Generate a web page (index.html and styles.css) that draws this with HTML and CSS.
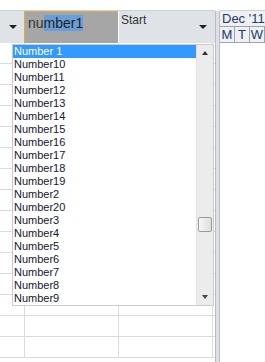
FILE: index.html
```html
<!DOCTYPE html>
<html lang="en">

<head>
    <meta charset="UTF-8">
    <title>Combo Dropdown</title>
    <link rel="stylesheet" href="styles.css">
</head>

<body>
    <div class="sheet">
        <div class="topbar"></div>
        <div class="head">
            <div class="head-cell head-sel"><span class="arrow-down"></span></div>
            <div class="head-cell head-num">nu<span class="sel-text">mber1</span></div>
            <div class="head-cell head-start">Start<span class="arrow-down"></span></div>
        </div>
        <div class="grid">
            <div class="row"><div class="c1"></div><div class="c2"></div><div class="c3"></div></div>
            <div class="row"><div class="c1"></div><div class="c2"></div><div class="c3"></div></div>
            <div class="row"><div class="c1"></div><div class="c2"></div><div class="c3"></div></div>
            <div class="row"><div class="c1"></div><div class="c2"></div><div class="c3"></div></div>
            <div class="row"><div class="c1"></div><div class="c2"></div><div class="c3"></div></div>
            <div class="row"><div class="c1"></div><div class="c2"></div><div class="c3"></div></div>
            <div class="row"><div class="c1"></div><div class="c2"></div><div class="c3"></div></div>
            <div class="row"><div class="c1"></div><div class="c2"></div><div class="c3"></div></div>
            <div class="row"><div class="c1"></div><div class="c2"></div><div class="c3"></div></div>
            <div class="row"><div class="c1"></div><div class="c2"></div><div class="c3"></div></div>
            <div class="row"><div class="c1"></div><div class="c2"></div><div class="c3"></div></div>
            <div class="row"><div class="c1"></div><div class="c2"></div><div class="c3"></div></div>
            <div class="row"><div class="c1"></div><div class="c2"></div><div class="c3"></div></div>
            <div class="row"><div class="c1"></div><div class="c2"></div><div class="c3"></div></div>
            <div class="row"><div class="c1"></div><div class="c2"></div><div class="c3"></div></div>
        </div>

        <!-- open dropdown list -->
        <div class="dropdown">
            <ul class="options">
                <li class="active">Number 1</li>
                <li>Number10</li>
                <li>Number11</li>
                <li>Number12</li>
                <li>Number13</li>
                <li>Number14</li>
                <li>Number15</li>
                <li>Number16</li>
                <li>Number17</li>
                <li>Number18</li>
                <li>Number19</li>
                <li>Number2</li>
                <li>Number20</li>
                <li>Number3</li>
                <li>Number4</li>
                <li>Number5</li>
                <li>Number6</li>
                <li>Number7</li>
                <li>Number8</li>
                <li>Number9</li>
            </ul>
            <div class="scrollbar">
                <span class="arrow-up"></span>
                <div class="track"><div class="thumb"></div></div>
                <span class="arrow-down"></span>
            </div>
        </div>
    </div>

    <div class="splitter"></div>

    <div class="calendar">
        <div class="topbar"></div>
        <div class="cal-month">Dec '11</div>
        <div class="cal-days">
            <div class="day">M</div>
            <div class="day">T</div>
            <div class="day">W</div>
        </div>
    </div>
</body>

</html>
```

FILE: styles.css
```css
* {
    margin: 0;
    padding: 0;
    box-sizing: border-box;
}

body {
    font-family: "Liberation Sans", Arial, sans-serif;
    width: 265px;
    height: 362px;
    overflow: hidden;
    display: flex;
    background-color: #fff;
}

.sheet {
    position: relative;
    width: 215px;
    display: flex;
    flex-direction: column;
}

.topbar {
    height: 11px;
    border-bottom: 1px solid #cdd1d6;
    background-color: #fff;
}

/* header row */
.head {
    display: flex;
    height: 32px;
}

.head-cell {
    position: relative;
    height: 100%;
}

.head-sel {
    width: 24px;
    background-color: #dfe2e7;
}

.head-num {
    width: 94px;
    background-color: #a6a6a6;
    border-top: 1px solid #e3a948;
    border-left: 1px solid #e3a948;
    font-size: 14px;
    color: #333;
    padding: 3px 0 0 3px;
    line-height: 17px;
}

.sel-text {
    background-color: #6a9edb;
    color: #222;
}

.head-start {
    width: 97px;
    background-color: #dfe2e7;
    border-left: 1px solid #fff;
    font-size: 12px;
    color: #333;
    padding: 2px 0 0 2px;
}

.arrow-down,
.arrow-up {
    display: block;
    width: 0;
    height: 0;
    border-left: 4px solid transparent;
    border-right: 4px solid transparent;
}

.arrow-down {
    border-top: 4px solid #222;
}

.arrow-up {
    border-bottom: 4px solid #333;
}

.head-cell .arrow-down {
    position: absolute;
    top: 14px;
}

.head-sel .arrow-down {
    left: 9px;
}

.head-start .arrow-down {
    left: 80px;
}

/* background grid */
.grid {
    display: flex;
    flex-direction: column;
}

.row {
    display: flex;
    height: 21px;
    border-bottom: 1px solid #dadada;
}

.row div {
    height: 100%;
    border-right: 1px solid #dadada;
}

.c1 {
    width: 25px;
}

.c2 {
    width: 94px;
}

.c3 {
    width: 94px;
}

/* dropdown list */
.dropdown {
    position: absolute;
    left: 12px;
    top: 44px;
    width: 202px;
    height: 262px;
    display: flex;
    background-color: #fff;
    border: 1px solid #c8ccd2;
}

.options {
    list-style: none;
    flex: 1;
    font-size: 11px;
    color: #15152e;
}

.options li {
    height: 13px;
    line-height: 13px;
    padding-left: 1px;
}

.options li.active {
    background-color: #3399ff;
    color: #fff;
}

.scrollbar {
    width: 17px;
    display: flex;
    flex-direction: column;
    align-items: center;
    background-color: #ececec;
    border-left: 1px solid #e2e2e2;
}

.scrollbar .arrow-up {
    margin-top: 6px;
    margin-bottom: 6px;
    border-left-width: 3px;
    border-right-width: 3px;
}

.scrollbar .arrow-down {
    margin-top: 6px;
    margin-bottom: 6px;
    border-left-width: 3px;
    border-right-width: 3px;
    border-top-color: #444;
}

.track {
    flex: 1;
    width: 100%;
    position: relative;
}

.thumb {
    position: absolute;
    left: 1px;
    top: 156px;
    width: 14px;
    height: 15px;
    border: 1px solid #9a9a9a;
    border-radius: 2px;
    background: linear-gradient(to right, #f6f6f6, #dedede);
}

/* splitter between sheet and calendar */
.splitter {
    width: 6px;
    margin-top: 11px;
    background-color: #dcdfe3;
    border-left: 1px solid #b9bdc3;
    border-right: 1px solid #b9bdc3;
}

/* calendar pane */
.calendar {
    flex: 1;
    color: #1f3a6b;
    font-size: 13px;
}

.cal-month {
    height: 16px;
    line-height: 15px;
    padding-left: 2px;
    white-space: nowrap;
    overflow: hidden;
    background-color: #eef0f3;
    border-bottom: 1px solid #9ea3aa;
}

.cal-days {
    display: flex;
    height: 16px;
    background-color: #eef0f3;
    border-bottom: 1px solid #9ea3aa;
}

.day {
    width: 15px;
    flex-shrink: 0;
    text-align: center;
    line-height: 15px;
    border-right: 1px solid #9ea3aa;
}
```
